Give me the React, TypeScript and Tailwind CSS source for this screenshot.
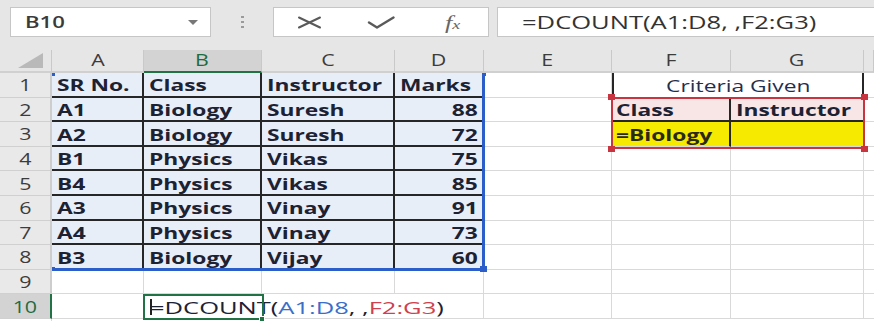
import React from 'react';

type Align = 'left' | 'right' | 'center';

const data = [
  ['SR No.', 'Class', 'Instructor', 'Marks'],
  ['A1', 'Biology', 'Suresh', '88'],
  ['A2', 'Biology', 'Suresh', '72'],
  ['B1', 'Physics', 'Vikas', '75'],
  ['B4', 'Physics', 'Vikas', '85'],
  ['A3', 'Physics', 'Vinay', '91'],
  ['A4', 'Physics', 'Vinay', '73'],
  ['B3', 'Biology', 'Vijay', '60'],
];

const grid = 'border-r border-b border-[#d9d9d9]';

function Wide({ children, align = 'left', className = '' }: { children: React.ReactNode; align?: Align; className?: string }) {
  const origin = align === 'right' ? 'origin-right' : align === 'center' ? 'origin-center' : 'origin-left';
  return <span className={`inline-block whitespace-nowrap scale-x-[1.38] ${origin} ${className}`}>{children}</span>;
}

function Cell({ children, align = 'left', className = '' }: { children?: React.ReactNode; align?: Align; className?: string }) {
  const justify = align === 'right' ? 'justify-end' : align === 'center' ? 'justify-center' : 'justify-start';
  return (
    <div className={`flex items-center px-[5px] pt-[3px] ${justify} ${className}`}>
      {children != null && children !== '' && <Wide align={align}>{children}</Wide>}
    </div>
  );
}

function ColHeader({ label, active }: { label: string; active?: boolean }) {
  return (
    <div
      className={`flex items-center justify-center text-[15.5px] border-r border-r-[#c9c9c9] border-b-2 ${
        active ? 'bg-[#d3d3d3] text-[#1e6b41] border-b-[#217346]' : 'bg-[#e6e6e6] text-[#3c3c3c] border-b-[#d0d0d0]'
      }`}
    >
      <Wide align="center">{label}</Wide>
    </div>
  );
}

function RowHeader({ n, active }: { n: number; active?: boolean }) {
  return (
    <div
      className={`flex items-center justify-center text-[15.5px] pt-[2px] border-b border-b-[#d0d0d0] border-r-2 ${
        active ? 'bg-[#d3d3d3] text-[#1e6b41] border-r-[#217346]' : 'bg-[#e9e9e9] text-[#3c3c3c] border-r-[#cdcdcd]'
      }`}
    >
      <Wide align="center">{n}</Wide>
    </div>
  );
}

function Toolbar() {
  return (
    <div className="h-[50px] bg-[#e6e6e6] flex items-start pt-[7px] pl-[10px] overflow-hidden">
      <div className="w-[201px] h-[30px] bg-white border border-[#c6c6c6] flex items-center pl-[14px] pr-[12px] text-[16px] font-semibold text-[#3a3a3a]">
        <Wide>B10</Wide>
        <div className="ml-auto w-0 h-0 border-l-[5px] border-r-[5px] border-t-[5px] border-l-transparent border-r-transparent border-t-[#777]" />
      </div>
      <div className="w-[62px] h-[30px] flex flex-col items-center justify-center gap-[2.5px]">
        <div className="w-[3px] h-[2.5px] bg-[#9a9a9a]" />
        <div className="w-[3px] h-[2.5px] bg-[#9a9a9a]" />
        <div className="w-[3px] h-[2.5px] bg-[#9a9a9a]" />
      </div>
      <div className="w-[216px] h-[30px] bg-white border border-[#c6c6c6] grid grid-cols-3 items-center justify-items-center">
        <svg width="25" height="13" viewBox="0 0 25 13" className="text-[#5a5a5a]">
          <path d="M2 1.5 L23 11.5 M2 11.5 L23 1.5" stroke="currentColor" strokeWidth="2" fill="none" strokeLinecap="round" />
        </svg>
        <svg width="28" height="13" viewBox="0 0 28 13" className="text-[#5a5a5a]">
          <path d="M2 6.5 L10 11.5 L26.5 1.5" stroke="currentColor" strokeWidth="2.4" fill="none" strokeLinecap="round" strokeLinejoin="round" />
        </svg>
        <span className="font-['Liberation_Serif',serif] italic text-[#666] text-[19px] leading-none">
          <Wide align="center">
            f<span className="text-[13px]">x</span>
          </Wide>
        </span>
      </div>
      <div className="ml-[8px] flex-1 h-[30px] bg-white border border-[#c6c6c6] -mr-[4px] flex items-center pl-[24px] text-[17.5px] text-[#333]">
        <span className="inline-block whitespace-nowrap origin-left scale-x-[1.46]">=DCOUNT(A1:D8, ,F2:G3)</span>
      </div>
    </div>
  );
}

export default function App() {
  const tableRows = data.map((row, r) => {
    const n = r + 1;
    const last = r === data.length - 1;
    return (
      <React.Fragment key={n}>
        <RowHeader n={n} />
        {row.map((v, c) => {
          const right = c < 3 ? 'border-r-2 border-r-[#262626]' : 'border-r border-r-[#d9d9d9]';
          const bottom = last ? 'border-b border-b-[#d9d9d9]' : 'border-b-2 border-b-[#262626]';
          return (
            <Cell key={c} align={c === 3 && r > 0 ? 'right' : 'left'} className={`bg-[#e8eef8] font-bold text-[#1d2233] ${right} ${bottom}`}>
              {v}
            </Cell>
          );
        })}
        <Cell className={grid} />
        {n === 1 && (
          <Cell align="center" className="col-span-2 border-l-2 border-l-[#262626] border-r-2 border-r-[#262626] border-b border-b-[#d9d9d9] text-[#1f2f4d]">
            Criteria Given
          </Cell>
        )}
        {n === 2 && (
          <>
            <Cell className="bg-[#f8e6e7] font-bold text-[#1d2233] border-r-2 border-r-[#262626] border-b-2 border-b-[#262626] pl-[4px]">Class</Cell>
            <Cell className="bg-[#f8e6e7] font-bold text-[#1d2233] border-b-2 border-b-[#262626] border-r border-r-[#d9d9d9]">Instructor</Cell>
          </>
        )}
        {n === 3 && (
          <>
            <Cell className="bg-[#f6ea00] font-bold text-[#2a2a14] border-r-2 border-r-[#262626] border-b border-b-[#d9d9d9] pl-[4px]">=Biology</Cell>
            <Cell className="bg-[#f6ea00] border-b border-b-[#d9d9d9] border-r border-r-[#d9d9d9]" />
          </>
        )}
        {n > 3 && (
          <>
            <Cell className={grid} />
            <Cell className={grid} />
          </>
        )}
        <Cell className={grid} />
      </React.Fragment>
    );
  });

  return (
    <div className="w-[874px] h-[321px] overflow-hidden bg-white font-['Open_Sans','DejaVu_Sans',sans-serif] text-[16.5px]">
      <Toolbar />
      <div className="relative grid grid-cols-[52px_92px_118px_133px_89px_128px_119px_133px_10px] grid-rows-[23px_repeat(10,24.6px)]">
        <div className="flex items-end justify-end pr-[8px] pb-[3px] bg-[#e6e6e6] border-r border-r-[#c9c9c9] border-b-2 border-b-[#d0d0d0]">
          <svg width="25" height="15" viewBox="0 0 25 15" className="shrink-0">
            <path d="M25 0 V15 H0 Z" fill="#b9b9b9" />
          </svg>
        </div>
        <ColHeader label="A" />
        <ColHeader label="B" active />
        <ColHeader label="C" />
        <ColHeader label="D" />
        <ColHeader label="E" />
        <ColHeader label="F" />
        <ColHeader label="G" />
        <ColHeader label="" />

        {tableRows}

        <RowHeader n={9} />
        {Array.from({ length: 8 }).map((_, i) => (
          <Cell key={i} className={grid} />
        ))}

        <RowHeader n={10} active />
        <Cell className={grid} />
        <div className="relative z-10 flex items-center pl-[6px] pt-[3px] text-[17px] text-[#1d2233] border-b border-b-[#d9d9d9]">
          <span className="absolute left-[6px] top-[5px] w-[2px] h-[16px] bg-[#222]" />
          <span className="inline-block whitespace-nowrap origin-left scale-x-[1.5]">
            =DCOUNT(<span className="text-[#3a6fc9]">A1:D8</span>, ,<span className="text-[#d0404f]">F2:G3</span>)
          </span>
        </div>
        <Cell className="border-b border-b-[#d9d9d9]" />
        <Cell className={grid} />
        <Cell className={grid} />
        <Cell className={grid} />
        <Cell className={grid} />
        <Cell className={grid} />
        <Cell className={grid} />

        {/* formula range highlight: A1:D8 */}
        <div className="absolute left-[482px] top-[23px] w-[3px] h-[197px] bg-[#2c5ec9]" />
        <div className="absolute left-[52px] top-[218px] w-[433px] h-[2.5px] bg-[#2c5ec9]" />
        <div className="absolute left-[52px] top-[23px] w-[3px] h-[3px] bg-[#2c5ec9]" />
        <div className="absolute left-[52px] top-[217px] w-[3px] h-[3px] bg-[#2c5ec9]" />
        <div className="absolute left-[482px] top-[23px] w-[4px] h-[3px] bg-[#2c5ec9]" />
        <div className="absolute left-[480px] top-[216px] w-[7px] h-[6px] bg-[#2c5ec9]" />

        {/* formula range highlight: F2:G3 */}
        <div className="absolute left-[611px] top-[47px] w-[254px] h-[52px] border-2 border-[#c8343f]" />
        <div className="absolute left-[608px] top-[44px] w-[7px] h-[6px] bg-[#c8343f]" />
        <div className="absolute left-[861px] top-[44px] w-[7px] h-[6px] bg-[#c8343f]" />
        <div className="absolute left-[608px] top-[96px] w-[7px] h-[6px] bg-[#c8343f]" />
        <div className="absolute left-[861px] top-[96px] w-[7px] h-[6px] bg-[#c8343f]" />

        {/* active cell B10 */}
        <div className="absolute left-[143px] top-[244px] w-[121px] h-[26px] border-2 border-[#217346] z-20" />
        <div className="absolute left-[259px] top-[266px] w-[6px] h-[6px] bg-[#217346] border border-white z-20" />
      </div>
    </div>
  );
}
